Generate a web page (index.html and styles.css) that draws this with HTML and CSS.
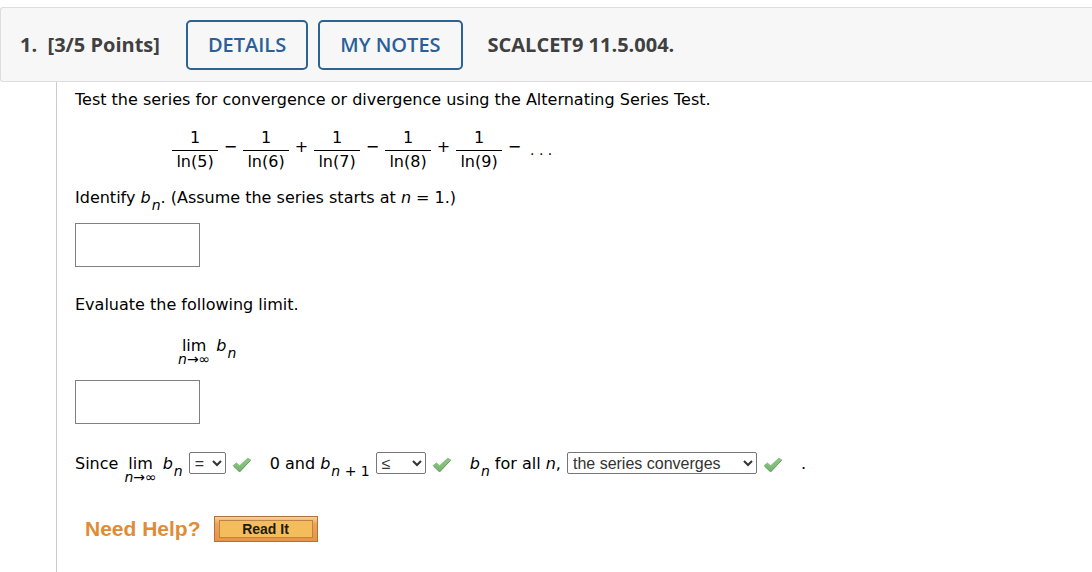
FILE: index.html
```html
<!DOCTYPE html>
<html lang="en">
<head>
    <meta charset="UTF-8">
    <meta name="viewport" content="width=device-width, initial-scale=1.0">
    <title>SCALCET9 11.5.004.</title>
    <link rel="stylesheet" href="styles.css">
</head>
<body>
    <svg class="defs" width="0" height="0" aria-hidden="true">
        <linearGradient id="tick-fill" x1="0" y1="0" x2="0" y2="1">
            <stop offset="0" stop-color="#8fca86"/>
            <stop offset="1" stop-color="#74b46d"/>
        </linearGradient>
        <symbol id="tick" viewBox="0 0 20 16">
            <path d="M1.2 8.6 4.3 6 7.6 8.8 15.8 1.2 18.8 3 7.6 15Z" fill="url(#tick-fill)" stroke="#86b981" stroke-width="1" stroke-linejoin="round"/>
            <path d="M1.8 9.4 7.6 14.6 18.4 3.6" fill="none" stroke="#6b9f67" stroke-width="1"/>
        </symbol>
    </svg>

    <header class="question-header">
        <h1 class="points">1.&nbsp; [3/5 Points]</h1>
        <button class="header-btn" type="button">DETAILS</button>
        <button class="header-btn" type="button">MY NOTES</button>
        <span class="question-name">SCALCET9 11.5.004.</span>
    </header>

    <main class="question">
        <p class="line">Test the series for convergence or divergence using the Alternating Series Test.</p>

        <div class="series">
            <span class="frac"><span class="num">1</span><span>ln(5)</span></span>
            <span class="op">−</span>
            <span class="frac"><span class="num">1</span><span>ln(6)</span></span>
            <span class="op">+</span>
            <span class="frac"><span class="num">1</span><span>ln(7)</span></span>
            <span class="op">−</span>
            <span class="frac"><span class="num">1</span><span>ln(8)</span></span>
            <span class="op">+</span>
            <span class="frac"><span class="num">1</span><span>ln(9)</span></span>
            <span class="op">−</span>
            <span class="dots">. . .</span>
        </div>

        <p class="line"><label for="bn">Identify <i>b</i><sub><i>n</i></sub>. (Assume the series starts at <i>n</i> = 1.)</label></p>
        <input class="answer" id="bn" type="text">

        <p class="line evaluate"><label for="limit">Evaluate the following limit.</label></p>
        <div class="limit-row">
            <span class="lim"><span>lim</span><span class="under"><i>n</i>→∞</span></span>
            <span><i>b</i><sub><i>n</i></sub></span>
        </div>
        <input class="answer" id="limit" type="text">

        <div class="since">
            <span>Since</span>
            <span class="lim"><span>lim</span><span class="under"><i>n</i>→∞</span></span>
            <span><i>b</i><sub><i>n</i></sub></span>
            <select class="pick pick-equal" aria-label="Compare limit with 0"><option>=</option><option>≠</option></select>
            <svg class="tick" role="img" aria-label="Correct"><use href="#tick"/></svg>
            <span>0 and <i>b</i><sub><i>n</i> + 1</sub></span>
            <select class="pick pick-order" aria-label="Compare terms"><option>≤</option><option>≥</option></select>
            <svg class="tick" role="img" aria-label="Correct"><use href="#tick"/></svg>
            <span><i>b</i><sub><i>n</i></sub> for all <i>n</i>,</span>
            <select class="pick pick-result" aria-label="Conclusion"><option>the series converges</option><option>the series diverges</option></select>
            <svg class="tick" role="img" aria-label="Correct"><use href="#tick"/></svg>
            <span>.</span>
        </div>

        <div class="help">
            <span class="help-title">Need Help?</span>
            <button class="read-btn" type="button"><span class="read-face">Read It</span></button>
        </div>
    </main>
</body>
</html>
```
FILE: styles.css
```css
* { box-sizing: border-box; }
body { margin: 0; padding-top: 7px; min-height: 100vh; display: flex; flex-direction: column; background: #fff; color: #000; font: 16px/20px "DejaVu Sans", Verdana, sans-serif; }
.defs { position: absolute; }

.question-header { display: flex; align-items: center; padding: 12px 19px 11px; border: 1px solid #ddd; border-right: 0; border-radius: 3px 0 0 3px; background: #f7f7f7; color: #404040; font: bold 20px/26px "Open Sans", sans-serif; }
.points { margin: 0 26px 0 0; font: inherit; }
.header-btn { height: 50px; margin-right: 10px; padding: 0 20px; border: 2px solid #2a6496; border-radius: 5px; background: #f7f7f7; color: #2a6099; font: 600 20px/26px "Open Sans", sans-serif; cursor: pointer; }
.question-name { margin-left: 15px; }

.question { flex: 1; margin-left: 56px; padding: 8px 18px 0; border-left: 1px solid #ccc; }
.line { margin: 0; }
sub { font-size: 14px; line-height: 0; vertical-align: -7px; margin-left: 1px; }

.series { display: flex; align-items: center; margin: 18px 0 16px 97px; }
.frac { display: flex; flex-direction: column; width: 46px; text-align: center; }
.num { margin-bottom: 1px; padding-bottom: 2px; border-bottom: 1px solid #000; }
.op { width: 25px; padding-bottom: 6px; text-align: center; }
.dots { padding-left: 3px; font-size: 14px; }

.answer { display: block; width: 125px; height: 44px; margin-top: 15px; padding: 4px 8px; border: 1px solid #808080; background: #fff; font: inherit; }
.evaluate { margin-top: 28px; }

.limit-row { display: flex; align-items: baseline; gap: 6px; margin: 21px 0 16px 103px; }
.lim { display: flex; flex-direction: column; align-items: center; line-height: 16px; }
.under { font-size: 14px; line-height: 10px; }

.since { display: flex; align-items: baseline; gap: 6px; margin-top: 28px; white-space: nowrap; }
.pick { height: 22px; padding: 0 1px; border: 1px solid #767676; border-radius: 2px; background-color: #fff; color: #333; font: 16px "Liberation Sans", Arial, sans-serif; }
.pick-equal { width: 37px; }
.pick-order { width: 50px; }
.pick-result { width: 190px; }
.tick { width: 20px; height: 16px; margin: 5px 12px 0 0; align-self: flex-start; }

.help { display: flex; align-items: center; gap: 13px; margin: 34px 0 0 10px; font-family: "Liberation Sans", Arial, sans-serif; font-weight: bold; }
.help-title { color: #e08c36; font-size: 21px; line-height: 26px; }
.read-btn { display: flex; width: 104px; height: 26px; padding: 3px 4px; border: 1px solid #a8743c; background: linear-gradient(#f8cf9c, #eea256 30%, #e8944a); color: #221a10; font: bold 14px/16px "Liberation Sans", Arial, sans-serif; cursor: pointer; }
.read-face { flex: 1; border: 1px solid #b98446; background: #f3bd5c; }
```
